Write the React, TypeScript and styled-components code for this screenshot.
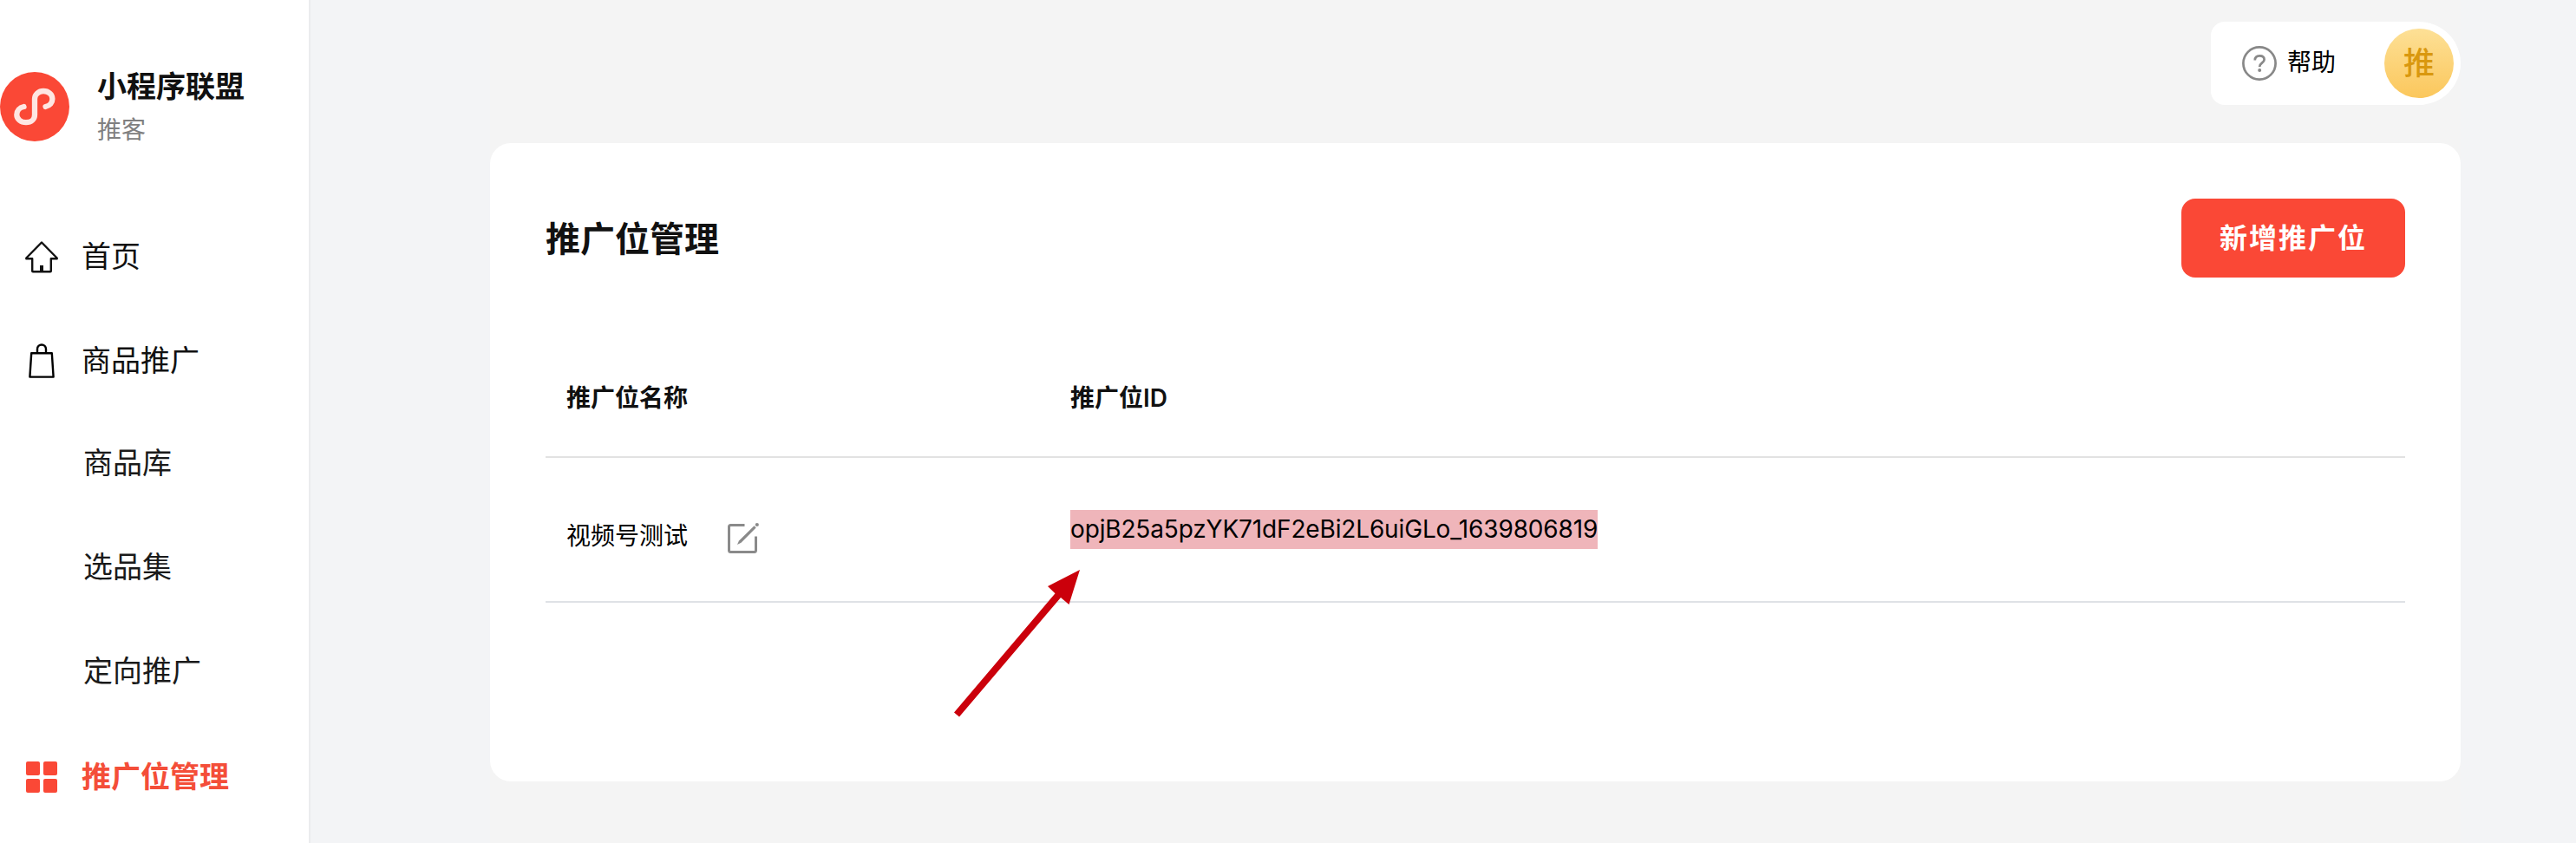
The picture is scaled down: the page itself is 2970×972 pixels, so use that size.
import React from 'react';
import styled, { createGlobalStyle, css } from 'styled-components';

const Global = createGlobalStyle`
  *, *::before, *::after { box-sizing: border-box; }
  html, body { margin: 0; padding: 0; }
  body {
    background: #f3f4f6;
    color: #111;
    font-family: Inter, 'Noto Sans CJK SC', sans-serif;
    overflow: hidden;
  }
  svg { display: block; flex: none; }
`;

const Page = styled.div`
  display: flex;
  height: 972px;
  overflow: hidden;
`;

const Sidebar = styled.aside`
  flex: none;
  width: 358px;
  background: #fff;
  border-right: 2px solid #ebecee;
`;

const Brand = styled.header`
  display: flex;
  align-items: flex-start;
  height: 236px;
  padding-top: 83px;
`;

const BrandText = styled.div`
  margin-left: 32px;
  margin-top: -8px;
`;

const BrandName = styled.div`
  font-size: 34px;
  line-height: 50px;
  font-weight: 700;
`;

const BrandRole = styled.div`
  font-size: 28px;
  line-height: 50px;
  color: #808080;
`;

const Nav = styled.nav`
  display: flex;
  flex-direction: column;
`;

const NavItem = styled.a<{ $active?: boolean }>`
  display: flex;
  align-items: center;
  height: 120px;
  padding-left: 24px;
  gap: 22px;
  font-size: 34px;
  line-height: 48px;
  color: #111;
  ${(p) =>
    p.$active &&
    css`
      color: #f44e39;
      font-weight: 700;
    `}
`;

const SubNav = styled.div`
  padding-bottom: 2px;
  margin-top: -2px;
`;

const SubItem = styled.a`
  display: flex;
  align-items: center;
  height: 120px;
  padding-left: 96px;
  font-size: 34px;
  line-height: 48px;
  color: #1a1a1a;
`;

const Main = styled.main`
  width: 2272px;
  margin-left: 207px;
  background: #f4f4f4;
`;

const TopBar = styled.div`
  display: flex;
  justify-content: flex-end;
  height: 165px;
  padding-top: 25px;
`;

const UserPanel = styled.div`
  display: flex;
  align-items: center;
  width: 288px;
  height: 96px;
  padding: 0 8px 0 36px;
  background: #fff;
  border-radius: 16px 48px 48px 16px;
`;

const HelpLabel = styled.span`
  margin: -3px auto 0 12px;
  font-size: 28px;
  line-height: 40px;
  color: #000;
`;

const Avatar = styled.div`
  display: flex;
  align-items: center;
  justify-content: center;
  width: 80px;
  height: 80px;
  border-radius: 50%;
  background: linear-gradient(#fde096, #fbc75c);
  color: #d9980f;
  font-size: 36px;
  line-height: 52px;
  font-weight: 500;
`;

const Card = styled.section`
  height: 736px;
  padding: 64px;
  background: #fff;
  border-radius: 24px;
`;

const CardHead = styled.div`
  display: flex;
  justify-content: space-between;
  height: 159px;
`;

const Title = styled.h1`
  margin: 0;
  font-size: 40px;
  line-height: 94px;
  font-weight: 700;
`;

const PrimaryButton = styled.button`
  width: 258px;
  height: 91px;
  padding: 0;
  border: 0;
  border-radius: 16px;
  background: #fa4836;
  color: #fff;
  font-family: inherit;
  font-size: 32px;
  line-height: 46px;
  font-weight: 700;
  letter-spacing: 2px;
`;

const Row = styled.div<{ $head?: boolean }>`
  display: grid;
  grid-template-columns: 581px 1fr;
  align-items: center;
  height: ${(p) => (p.$head ? 140 : 167)}px;
  padding: ${(p) => (p.$head ? 3 : 0)}px 0 0 24px;
  border-bottom: 2px solid ${(p) => (p.$head ? '#e2e2e2' : '#dfe2e6')};
  font-size: 28px;
  line-height: 40px;
  font-weight: ${(p) => (p.$head ? 600 : 400)};
  color: ${(p) => (p.$head ? '#111' : '#000')};
`;

const NameCell = styled.div`
  display: flex;
  align-items: center;
  gap: 45px;
  padding-top: 14px;

  svg {
    margin-top: 5px;
  }
`;

const IdCell = styled.div`
  position: relative;
`;

const Highlight = styled.mark`
  display: block;
  width: 608px;
  height: 45px;
  line-height: 45px;
  letter-spacing: -0.15px;
  white-space: nowrap;
  background: #efb5ba;
  color: #000;
`;

const Arrow = styled.svg`
  position: absolute;
  left: -144px;
  top: 62px;
  overflow: visible;
`;

const LogoIcon = () => (
  <svg width="80" height="80" viewBox="0 0 80 80">
    <circle cx="40" cy="40" r="40" fill="#fa4836" />
    <path
      d="M27.5 40C22.5 41 19.300 44.500 19.300 49.300C19.300 54.300 24 58.200 30 58.200C36 58.200 40 54.500 40 49.500V31C40 26 44.500 22 50 22C56 22 60.400 26 60.400 31C60.400 35.500 57.500 39 52.500 40"
      fill="none"
      stroke="#fee6e2"
      strokeWidth="6.300"
      strokeLinecap="round"
    />
  </svg>
);

const HomeIcon = () => (
  <svg width="48" height="48" viewBox="0 0 48 48" fill="none" stroke="#111" strokeWidth="2.400" strokeLinejoin="round">
    <path d="M24 7.500L6.300 25.500V26.300H13.200V40.500Q13.200 41.200 14 41.200H34Q34.800 41.200 34.800 40.500V26.300H41.700V25.500Z" />
    <path d="M24 34V41" strokeWidth="4" />
  </svg>
);

const BagIcon = () => (
  <svg width="48" height="48" viewBox="0 0 48 48" fill="none" stroke="#000" strokeWidth="2.400" strokeLinejoin="round">
    <path d="M12.200 15.200H35.800L37.600 42.600H10.400Z" />
    <path d="M19 15V10.500A5 5 0 0 1 29 10.500V15" />
  </svg>
);

const GridIcon = () => (
  <svg width="48" height="48" viewBox="0 0 48 48" fill="#fa4836">
    <rect x="6" y="6" width="16" height="16" rx="2" />
    <rect x="26" y="6" width="16" height="16" rx="2" />
    <rect x="6" y="26" width="16" height="16" rx="2" />
    <rect x="26" y="26" width="16" height="16" rx="2" />
  </svg>
);

const HelpIcon = () => (
  <svg width="40" height="40" viewBox="0 0 40 40" fill="none" stroke="#888" strokeWidth="2.700">
    <circle cx="20" cy="20" r="18.600" />
    <path d="M14.800 16.500C14.800 13 17 11.300 20.200 11.300C23.400 11.300 25.600 13 25.600 15.700C25.600 19.300 20.200 19.500 20.200 24" />
    <circle cx="20.200" cy="28" r="2" fill="#888" stroke="none" />
  </svg>
);

const EditIcon = () => (
  <svg width="40" height="40" viewBox="0 0 40 40" fill="none" stroke="#8a8a8a" strokeWidth="3">
    <path d="M20.500 5.500H4.500Q2.500 5.500 2.500 7.500V34.500Q2.500 36.500 4.500 36.500H31.500Q33.500 36.500 33.500 34.500V18.500" />
    <path d="M12 28L14 23.500L31.500 6.300L33.700 8.500L16.500 25.800Z" fill="#8a8a8a" stroke="none" />
    <circle cx="34.800" cy="5" r="2.100" fill="#8a8a8a" stroke="none" />
  </svg>
);

const subItems = ['商品库', '选品集', '定向推广'];

export default function App() {
  return (
    <>
      <Global />
      <Page>
        <Sidebar>
          <Brand>
            <LogoIcon />
            <BrandText>
              <BrandName>小程序联盟</BrandName>
              <BrandRole>推客</BrandRole>
            </BrandText>
          </Brand>
          <Nav>
            <NavItem>
              <HomeIcon />
              首页
            </NavItem>
            <NavItem>
              <BagIcon />
              商品推广
            </NavItem>
            <SubNav>
              {subItems.map((label) => (
                <SubItem key={label}>{label}</SubItem>
              ))}
            </SubNav>
            <NavItem $active>
              <GridIcon />
              推广位管理
            </NavItem>
          </Nav>
        </Sidebar>
        <Main>
          <TopBar>
            <UserPanel>
              <HelpIcon />
              <HelpLabel>帮助</HelpLabel>
              <Avatar>推</Avatar>
            </UserPanel>
          </TopBar>
          <Card>
            <CardHead>
              <Title>推广位管理</Title>
              <PrimaryButton>新增推广位</PrimaryButton>
            </CardHead>
            <Row $head>
              <div>推广位名称</div>
              <div>推广位ID</div>
            </Row>
            <Row>
              <NameCell>
                视频号测试
                <EditIcon />
              </NameCell>
              <IdCell>
                <Highlight>opjB25a5pzYK71dF2eBi2L6uiGLo_1639806819</Highlight>
                <Arrow width="160" height="180" viewBox="1090 650 160 180">
                  <path d="M1245 657L1232.500 697L1223 689L1106 826.500L1100 821.500L1216.500 684.300L1208 676Z" fill="#cb000b" />
                </Arrow>
              </IdCell>
            </Row>
          </Card>
        </Main>
      </Page>
    </>
  );
}
